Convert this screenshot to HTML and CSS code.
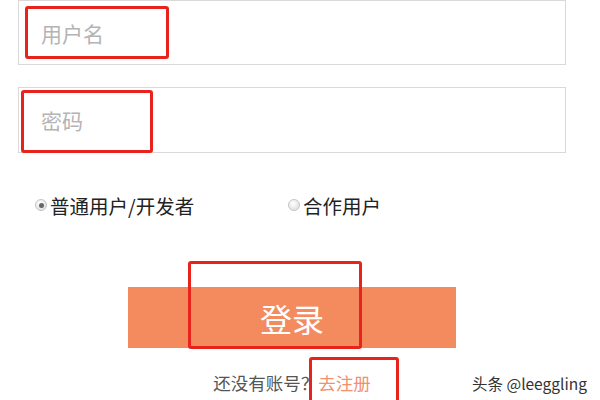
FILE: index.html
```html
<!DOCTYPE html>
<html lang="zh-CN">
<head>
    <meta charset="UTF-8">
    <meta name="viewport" content="width=device-width, initial-scale=1.0">
    <title>登录</title>
    <link rel="stylesheet" href="styles.css">
</head>
<body>
    <div class="form">
        <input class="field field-user" type="text" placeholder="用户名">
        <input class="field field-pass" type="password" placeholder="密码">

        <div class="roles">
            <label class="role role-dev"><span class="dot checked"></span>普通用户/开发者</label>
            <label class="role"><span class="dot"></span>合作用户</label>
        </div>

        <button class="login">登录</button>

        <div class="signup">还没有账号？<a href="#">去注册</a></div>
    </div>

    <!-- annotation marks over the screenshot -->
    <div class="mark mark-user"></div>
    <div class="mark mark-pass"></div>
    <div class="mark mark-login"></div>
    <div class="mark mark-signup"></div>

    <div class="watermark">头条 @leeggling</div>
</body>
</html>
```

FILE: styles.css
```css
body {
    margin: 0;
    font-family: "Noto Sans CJK SC", "Noto Sans", sans-serif;
    background: #fff;
    overflow: hidden;
}

.form {
    width: 548px;
    margin-left: 18px;
    display: flex;
    flex-direction: column;
}

.field {
    box-sizing: border-box;
    width: 100%;
    border: 1px solid #d9d9d9;
    padding: 0 0 0 22px;
    font-family: inherit;
    font-size: 21px;
    outline: none;
}

.field::placeholder {
    color: #b4b4b4;
}

.field-user {
    height: 65px;
}

.field-pass {
    height: 66px;
    margin-top: 22px;
}

.roles {
    display: flex;
    margin-top: 40px;
    height: 24px;
    align-items: center;
    font-size: 19.5px;
    color: #222;
}

.role {
    display: flex;
    align-items: center;
}

.role-dev {
    width: 253px;
}

.dot {
    box-sizing: border-box;
    width: 12px;
    height: 12px;
    margin: 0 3px 0 17px;
    border-radius: 50%;
    border: 1px solid #c4c4c4;
    background: radial-gradient(circle at 40% 35%, #fff, #d8d8d8);
    position: relative;
}

.dot.checked::after {
    content: "";
    position: absolute;
    left: 2.5px;
    top: 2.5px;
    width: 5px;
    height: 5px;
    border-radius: 50%;
    background: #666;
}

.login {
    align-self: center;
    width: 328px;
    height: 61px;
    margin-top: 70px;
    border: none;
    background: #f48b5f;
    color: #fff;
    font-family: inherit;
    font-size: 32px;
    cursor: pointer;
}

.signup {
    align-self: center;
    margin-top: 23px;
    height: 24px;
    line-height: 24px;
    font-size: 17.5px;
    color: #555;
}

.signup a {
    color: #f29070;
    text-decoration: none;
}

.mark {
    position: absolute;
    box-sizing: border-box;
    border: 3px solid #e8231c;
    border-radius: 3px;
}

.mark-user {
    left: 25px;
    top: 6px;
    width: 144px;
    height: 53px;
}

.mark-pass {
    left: 21px;
    top: 90px;
    width: 132px;
    height: 63px;
}

.mark-login {
    left: 188px;
    top: 261px;
    width: 174px;
    height: 88px;
}

.mark-signup {
    left: 309px;
    top: 357px;
    width: 90px;
    height: 50px;
}

.watermark {
    position: absolute;
    left: 472px;
    top: 372px;
    font-size: 15.5px;
    color: #333;
}
```
